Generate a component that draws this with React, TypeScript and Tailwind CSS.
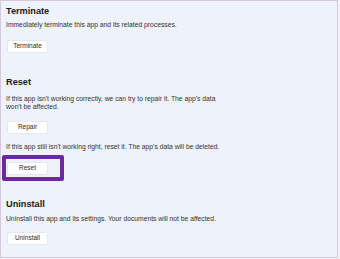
import React from "react";

const font = { fontFamily: '"Liberation Sans", Arial, sans-serif' };

function Btn({ label }: { label: string }) {
  return (
    <div className="w-[41px] h-[13px] bg-white border border-[#e6e8ee] rounded-[2px] flex items-center justify-center text-[6.5px] leading-none text-[#2b2b2b]">
      {label}
    </div>
  );
}

export default function App() {
  return (
    <div className="w-[340px] h-[259px] bg-[#f4f4f6]" style={font}>
      <div className="relative w-[338px] h-[258px] bg-[#eef2fa] border border-[#d5c9de] pl-[5px] pt-[4px]">
        <div className="text-[9.2px] leading-[12px] font-bold text-[#1b1b1b]">Terminate</div>
        <div className="mt-[4px] text-[6.75px] leading-[8px] text-[#333]">
          Immediately terminate this app and its related processes.
        </div>
        <div className="mt-[11px] ml-[1px]">
          <Btn label="Terminate" />
        </div>

        <div className="mt-[23px] text-[9.2px] leading-[12px] font-bold text-[#1b1b1b]">Reset</div>
        <div className="mt-[7px] text-[6.75px] leading-[8px] text-[#333]">
          If this app isn't working correctly, we can try to repair it. The app's data
          <br />
          won't be affected.
        </div>
        <div className="mt-[10px] ml-[1px]">
          <Btn label="Repair" />
        </div>
        <div className="mt-[9px] text-[6.75px] leading-[8px] text-[#333]">
          If this app still isn't working right, reset it. The app's data will be deleted.
        </div>
        <div className="mt-[11px] ml-[1px]">
          <Btn label="Reset" />
        </div>

        <div className="mt-[23px] text-[9.2px] leading-[12px] font-bold text-[#1b1b1b]">Uninstall</div>
        <div className="mt-[5px] text-[6.75px] leading-[8px] text-[#333]">
          Uninstall this app and its settings. Your documents will not be affected.
        </div>
        <div className="mt-[9px] ml-[1px]">
          <Btn label="Uninstall" />
        </div>

        <div className="absolute left-[1px] top-[154px] w-[62px] h-[26px] border-[4px] border-[#6b2aa3] rounded-[2px]" />
      </div>
    </div>
  );
}
